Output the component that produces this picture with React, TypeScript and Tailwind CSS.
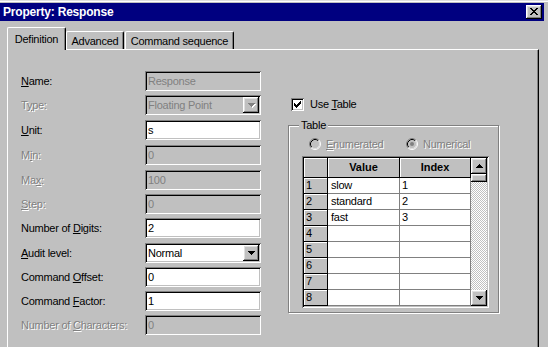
import React from "react";

const SUNKEN =
  "shadow-[inset_1px_1px_0_#808080,inset_-1px_-1px_0_#fff,inset_2px_2px_0_#000,inset_-2px_-2px_0_#c0c0c0]";
const RAISED =
  "shadow-[inset_-1px_-1px_0_#000,inset_1px_1px_0_#fff,inset_-2px_-2px_0_#808080,inset_2px_2px_0_#dfdfdf]";
const DIS = "text-[#808080] [text-shadow:1px_1px_0_#fff]";

function Lbl({ t, u, dis }: { t: string; u: string; dis?: boolean }) {
  const i = t.indexOf(u);
  return (
    <span className={dis ? DIS : ""}>
      {t.slice(0, i)}
      <span className="underline underline-offset-[1px]">{u}</span>
      {t.slice(i + 1)}
    </span>
  );
}

function Down({ c = "#000", dis }: { c?: string; dis?: boolean }) {
  return (
    <svg
      width="7"
      height="4"
      viewBox="0 0 7 4"
      shapeRendering="crispEdges"
      className={dis ? "drop-shadow-[1px_1px_0_#fff]" : ""}
    >
      <path fill={c} d="M0 0h7v1H0zM1 1h5v1H1zM2 2h3v1H2zM3 3h1v1H3z" />
    </svg>
  );
}

function Up() {
  return (
    <svg width="7" height="4" viewBox="0 0 7 4" shapeRendering="crispEdges">
      <path fill="#000" d="M3 0h1v1H3zM2 1h3v1H2zM1 2h5v1H1zM0 3h7v1H0z" />
    </svg>
  );
}

function Radio({ checked }: { checked?: boolean }) {
  return (
    <svg width="12" height="12" viewBox="0 0 12 12">
      <circle cx="6" cy="6" r="5" fill="#c0c0c0" />
      <path d="M2.11 9.89A5.5 5.5 0 0 1 9.89 2.11" stroke="#808080" fill="none" />
      <path d="M9.89 2.11A5.5 5.5 0 0 1 2.11 9.89" stroke="#fff" fill="none" />
      <path d="M2.82 9.18A4.5 4.5 0 0 1 9.18 2.82" stroke="#000" fill="none" />
      <path d="M9.18 2.82A4.5 4.5 0 0 1 2.82 9.18" stroke="#dfdfdf" fill="none" />
      {checked && <circle cx="6" cy="6" r="2" fill="#808080" />}
    </svg>
  );
}

type Row = {
  label: string;
  u: string;
  dis?: boolean;
  kind: "text" | "combo";
  value: string;
  fdis?: boolean;
  mt: string;
};

const rows: Row[] = [
  { label: "Name:", u: "N", kind: "text", value: "Response", fdis: true, mt: "mt-0" },
  { label: "Type:", u: "y", dis: true, kind: "combo", value: "Floating Point", fdis: true, mt: "mt-[4px]" },
  { label: "Unit:", u: "U", kind: "text", value: "s", mt: "mt-[5px]" },
  { label: "Min:", u: "i", dis: true, kind: "text", value: "0", fdis: true, mt: "mt-[5px]" },
  { label: "Max:", u: "x", dis: true, kind: "text", value: "100", fdis: true, mt: "mt-[5px]" },
  { label: "Step:", u: "S", dis: true, kind: "text", value: "0", fdis: true, mt: "mt-[4px]" },
  { label: "Number of Digits:", u: "D", kind: "text", value: "2", mt: "mt-[4px]" },
  { label: "Audit level:", u: "A", kind: "combo", value: "Normal", mt: "mt-[5px]" },
  { label: "Command Offset:", u: "O", kind: "text", value: "0", mt: "mt-[4px]" },
  { label: "Command Factor:", u: "F", kind: "text", value: "1", mt: "mt-[4px]" },
  { label: "Number of Characters:", u: "C", dis: true, kind: "text", value: "0", fdis: true, mt: "mt-[4px]" },
];

const tableData = [
  ["1", "slow", "1"],
  ["2", "standard", "2"],
  ["3", "fast", "3"],
  ["4", "", ""],
  ["5", "", ""],
  ["6", "", ""],
  ["7", "", ""],
  ["8", "", ""],
];

const HDR = "bg-[#c0c0c0] border-r border-b border-black shadow-[inset_1px_1px_0_#fff]";
const CELL = "bg-white border-r border-b border-[#808080] leading-[15px] whitespace-nowrap overflow-hidden";

export default function App() {
  return (
    <div className="w-[548px] h-[347px] overflow-hidden bg-[#c0c0c0] font-['Liberation_Sans',Arial,sans-serif] text-[11px] tracking-[-0.25px] text-black flex flex-col">
      <div className="h-px bg-[#dfdfdf] shrink-0" />
      <div className="h-px bg-white shrink-0" />
      <div className="h-px shrink-0" />
      {/* Title bar */}
      <div className="h-[18px] w-[544px] shrink-0 bg-[#000080] flex items-center justify-between pl-[3px] pr-[2px]">
        <span className="text-white font-bold text-[12px] tracking-[-0.2px] leading-none">
          Property: Response
        </span>
        <div className={`w-[16px] h-[14px] bg-[#c0c0c0] ${RAISED} flex items-center justify-center pr-px pb-px`}>
          <svg width="8" height="7" viewBox="0 0 8 7" shapeRendering="crispEdges">
            <path
              fill="#000"
              d="M0 0h2v1H0zM6 0h2v1H6zM1 1h2v1H1zM5 1h2v1H5zM2 2h4v1H2zM3 3h2v1H3zM2 4h4v1H2zM1 5h2v1H1zM5 5h2v1H5zM0 6h2v1H0zM6 6h2v1H6z"
            />
          </svg>
        </div>
      </div>
      {/* Tabs */}
      <div className="mt-[6px] h-[22px] shrink-0 pl-[7px] flex items-end">
        <div className="relative z-10 -mb-px h-[23px] w-[59px] bg-[#c0c0c0] border-l border-t border-white border-r border-r-black rounded-tl-[2px] rounded-tr-[2px] shadow-[inset_-1px_0_0_#808080] flex items-center justify-center pt-px">
          Definition
        </div>
        <div className="h-[18px] w-[58px] border-l border-t border-white border-r border-r-black rounded-tl-[2px] rounded-tr-[2px] shadow-[inset_-1px_0_0_#808080] flex items-center justify-center pt-px">
          Advanced
        </div>
        <div className="ml-px h-[18px] w-[109px] border-l border-t border-white border-r border-r-black rounded-tl-[2px] rounded-tr-[2px] shadow-[inset_-1px_0_0_#808080] flex items-center justify-center pt-px">
          Command sequence
        </div>
      </div>
      {/* Panel */}
      <div className="relative z-0 ml-[7px] w-[532px] flex-1 border-l border-t border-white border-r border-r-black shadow-[inset_-1px_0_0_#808080] flex">
        {/* Left form */}
        <div className="pl-[13px] pt-[21px] flex flex-col">
          {rows.map((r) => (
            <div key={r.label} className={`${r.mt} h-[20px] flex items-center`}>
              <div className="w-[124px] leading-none">
                <Lbl t={r.label} u={r.u} dis={r.dis} />
              </div>
              <div
                className={`w-[116px] h-[20px] p-[2px] flex items-center ${SUNKEN} ${
                  r.fdis ? "bg-[#c0c0c0]" : "bg-white"
                }`}
              >
                <span className={`flex-1 pl-px leading-none ${r.fdis ? "text-[#808080]" : ""}`}>
                  {r.value}
                </span>
                {r.kind === "combo" && (
                  <div className={`w-[16px] h-[16px] bg-[#c0c0c0] ${RAISED} flex items-center justify-center`}>
                    <Down c={r.fdis ? "#808080" : "#000"} dis={r.fdis} />
                  </div>
                )}
              </div>
            </div>
          ))}
        </div>
        {/* Right column */}
        <div className="ml-[27px] pt-[48px] flex flex-col">
          <div className="h-[13px] flex items-center gap-[6px] pl-[3px]">
            <div className={`w-[13px] h-[13px] bg-white ${SUNKEN} flex items-center justify-center`}>
              <svg width="7" height="7" viewBox="0 0 7 7" shapeRendering="crispEdges">
                <path
                  fill="#000"
                  d="M6 0h1v1H6zM5 1h2v1H5zM0 2h1v1H0zM4 2h3v1H4zM0 3h2v1H0zM3 3h3v1H3zM0 4h5v1H0zM1 5h3v1H1zM2 6h1v1H2z"
                />
              </svg>
            </div>
            <span className="leading-none">
              Use <span className="underline underline-offset-[1px]">T</span>able
            </span>
          </div>
          {/* Group box */}
          <div className="mt-[14px] relative w-[211px] h-[188px] border border-[#808080] shadow-[inset_1px_1px_0_#fff,1px_1px_0_#fff]">
            <span className="absolute left-[10px] top-[-7px] px-[2px] bg-[#c0c0c0] leading-[13px]">Table</span>
            <div className="pt-[12px] pl-[20px] flex h-[24px]">
              <div className="w-[97px] h-[12px] flex items-center gap-[5px]">
                <Radio />
                <span className={`leading-none ${DIS}`}>
                  <span className="underline underline-offset-[1px]">E</span>numerated
                </span>
              </div>
              <div className="h-[12px] flex items-center gap-[5px]">
                <Radio checked />
                <span className={`leading-none ${DIS}`}>Numerical</span>
              </div>
            </div>
            {/* Grid */}
            <div className={`ml-[13px] mt-[6px] w-[187px] h-[152px] p-[2px] bg-white ${SUNKEN} flex`}>
              <div className="grid grid-cols-[24px_72px_71px] grid-rows-[20px_repeat(8,16px)]">
                <div className={HDR} />
                <div className={`${HDR} flex items-center justify-center font-bold tracking-normal`}>Value</div>
                <div className={`${HDR} flex items-center justify-center font-bold tracking-normal`}>Index</div>
                {tableData.map((r) => (
                  <React.Fragment key={r[0]}>
                    <div className={`${HDR} pl-[2px] leading-[15px]`}>{r[0]}</div>
                    <div className={`${CELL} pl-[3px]`}>{r[1]}</div>
                    <div className={`${CELL} pl-[2px]`}>{r[2]}</div>
                  </React.Fragment>
                ))}
              </div>
              <div className="w-[16px] flex flex-col">
                <div className={`h-[16px] bg-[#c0c0c0] ${RAISED} flex items-center justify-center`}>
                  <Up />
                </div>
                <div className={`h-[8px] bg-[#c0c0c0] ${RAISED}`} />
                <div className="flex-1 bg-[image:repeating-conic-gradient(#c0c0c0_0_25%,#fff_0_50%)] bg-[length:2px_2px]" />
                <div className={`h-[16px] bg-[#c0c0c0] ${RAISED} flex items-center justify-center`}>
                  <Down />
                </div>
              </div>
            </div>
          </div>
        </div>
      </div>
    </div>
  );
}
